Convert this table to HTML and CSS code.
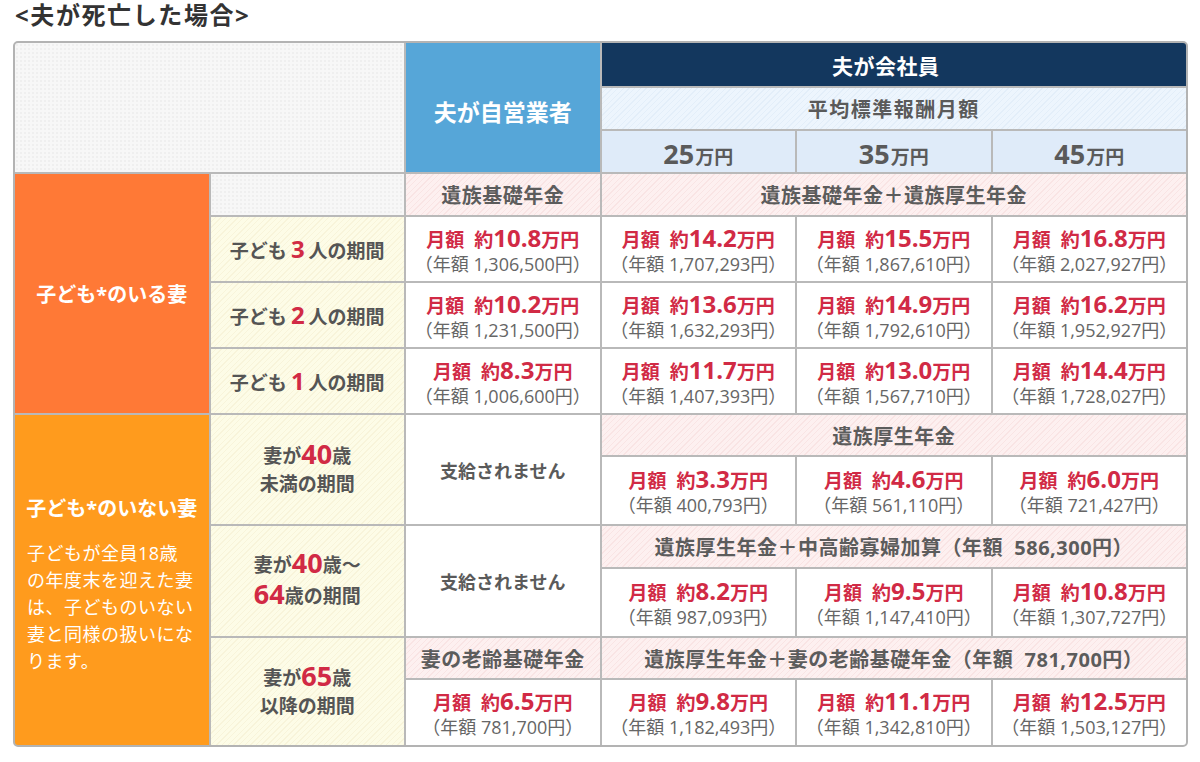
FILE: index.html
```html
<!DOCTYPE html>
<html lang="ja">
<head>
<meta charset="utf-8">
<title>夫が死亡した場合</title>
<link rel="stylesheet" href="styles.css">
</head>
<body>
<h1 class="title">&lt;夫が死亡した場合&gt;</h1>
<div class="wrap">
  <div class="table">
    <div class="cell blank c2 r3"></div>
    <div class="cell self r3">夫が自営業者</div>
    <div class="cell navy c3">夫が会社員</div>
    <div class="cell sub c3">平均標準報酬月額</div>
    <div class="cell amt"><b>25</b>万円</div>
    <div class="cell amt"><b>35</b>万円</div>
    <div class="cell amt"><b>45</b>万円</div>

    <div class="cell ora1 r4">子ども*のいる妻</div>
    <div class="cell blank"></div>
    <div class="cell pink">遺族基礎年金</div>
    <div class="cell pink c3">遺族基礎年金＋遺族厚生年金</div>

    <div class="cell yel">子ども<em>3</em>人の期間</div>
    <div class="cell val"><p class="m">月額<i></i>約<b>10.8</b>万円</p><p class="y">（年額 1,306,500円）</p></div>
    <div class="cell val"><p class="m">月額<i></i>約<b>14.2</b>万円</p><p class="y">（年額 1,707,293円）</p></div>
    <div class="cell val"><p class="m">月額<i></i>約<b>15.5</b>万円</p><p class="y">（年額 1,867,610円）</p></div>
    <div class="cell val"><p class="m">月額<i></i>約<b>16.8</b>万円</p><p class="y">（年額 2,027,927円）</p></div>

    <div class="cell yel">子ども<em>2</em>人の期間</div>
    <div class="cell val"><p class="m">月額<i></i>約<b>10.2</b>万円</p><p class="y">（年額 1,231,500円）</p></div>
    <div class="cell val"><p class="m">月額<i></i>約<b>13.6</b>万円</p><p class="y">（年額 1,632,293円）</p></div>
    <div class="cell val"><p class="m">月額<i></i>約<b>14.9</b>万円</p><p class="y">（年額 1,792,610円）</p></div>
    <div class="cell val"><p class="m">月額<i></i>約<b>16.2</b>万円</p><p class="y">（年額 1,952,927円）</p></div>

    <div class="cell yel">子ども<em>1</em>人の期間</div>
    <div class="cell val"><p class="m">月額<i></i>約<b>8.3</b>万円</p><p class="y">（年額 1,006,600円）</p></div>
    <div class="cell val"><p class="m">月額<i></i>約<b>11.7</b>万円</p><p class="y">（年額 1,407,393円）</p></div>
    <div class="cell val"><p class="m">月額<i></i>約<b>13.0</b>万円</p><p class="y">（年額 1,567,710円）</p></div>
    <div class="cell val"><p class="m">月額<i></i>約<b>14.4</b>万円</p><p class="y">（年額 1,728,027円）</p></div>

    <div class="cell ora2 r6">
      <p class="ora-title">子ども*のいない妻</p>
      <p class="note">子どもが全員18歳<br>の年度末を迎えた妻<br>は、子どものいない<br>妻と同様の扱いにな<br>ります。</p>
    </div>
    <div class="cell yel two r2"><p>妻が<em>40</em>歳</p><p>未満の期間</p></div>
    <div class="cell none r2">支給されません</div>
    <div class="cell pink c3">遺族厚生年金</div>
    <div class="cell val"><p class="m">月額<i></i>約<b>3.3</b>万円</p><p class="y">（年額 400,793円）</p></div>
    <div class="cell val"><p class="m">月額<i></i>約<b>4.6</b>万円</p><p class="y">（年額 561,110円）</p></div>
    <div class="cell val"><p class="m">月額<i></i>約<b>6.0</b>万円</p><p class="y">（年額 721,427円）</p></div>

    <div class="cell yel two wide r2"><p>妻が<em>40</em>歳～</p><p><em>64</em>歳の期間</p></div>
    <div class="cell none r2">支給されません</div>
    <div class="cell pink c3">遺族厚生年金＋中高齢寡婦加算（年額&nbsp;&nbsp;586,300円）</div>
    <div class="cell val"><p class="m">月額<i></i>約<b>8.2</b>万円</p><p class="y">（年額 987,093円）</p></div>
    <div class="cell val"><p class="m">月額<i></i>約<b>9.5</b>万円</p><p class="y">（年額 1,147,410円）</p></div>
    <div class="cell val"><p class="m">月額<i></i>約<b>10.8</b>万円</p><p class="y">（年額 1,307,727円）</p></div>

    <div class="cell yel two r2"><p>妻が<em>65</em>歳</p><p>以降の期間</p></div>
    <div class="cell pink">妻の老齢基礎年金</div>
    <div class="cell pink c3">遺族厚生年金＋妻の老齢基礎年金（年額&nbsp;&nbsp;781,700円）</div>
    <div class="cell val"><p class="m">月額<i></i>約<b>6.5</b>万円</p><p class="y">（年額 781,700円）</p></div>
    <div class="cell val"><p class="m">月額<i></i>約<b>9.8</b>万円</p><p class="y">（年額 1,182,493円）</p></div>
    <div class="cell val"><p class="m">月額<i></i>約<b>11.1</b>万円</p><p class="y">（年額 1,342,810円）</p></div>
    <div class="cell val"><p class="m">月額<i></i>約<b>12.5</b>万円</p><p class="y">（年額 1,503,127円）</p></div>
  </div>
</div>
</body>
</html>
```

FILE: styles.css
```css
* { box-sizing: border-box; }

html, body {
  margin: 0;
  padding: 0;
  background: #ffffff;
}

body {
  font-family: "Open Sans", "Noto Sans CJK JP", sans-serif;
  color: #555555;
  width: 1200px;
  height: 762px;
  overflow: hidden;
}

.title {
  margin: 0;
  padding-left: 15px;
  height: 32px;
  font-size: 24px;
  line-height: 30px;
  font-weight: 700;
  color: #333333;
  letter-spacing: 1.6px;
}

.wrap {
  padding-left: 13px;
  margin-top: 9px;
}

.table {
  width: 1175px;
  display: grid;
  grid-template-columns: repeat(6, 1fr);
  grid-template-rows: 43px 41px 41px 41px 64px 64px 64px 40px 67px 41px 67px 40px 65px;
  gap: 2px;
  background: #b9b9b9;
  border: 2px solid #b3b3b3;
  border-radius: 5px;
  overflow: hidden;
}

.c2 { grid-column: span 2; }
.c3 { grid-column: span 3; }
.r2 { grid-row: span 2; }
.r3 { grid-row: span 3; }
.r4 { grid-row: span 4; }
.r6 { grid-row: span 6; }

.cell {
  display: flex;
  flex-direction: column;
  align-items: center;
  justify-content: center;
  text-align: center;
  background: #ffffff;
  white-space: nowrap;
}

.cell p { margin: 0; }

.blank {
  background-color: #f7f7f7;
  background-image: radial-gradient(#efefef 0.8px, transparent 1px);
  background-size: 4px 4px;
}

.self {
  background: #56a6d8;
  color: #ffffff;
  font-size: 23px;
  font-weight: 700;
  padding-top: 6px;
}

.navy {
  background: #13375e;
  color: #ffffff;
  font-size: 21px;
  font-weight: 700;
  letter-spacing: 0.5px;
  padding-right: 16px;
}

.sub {
  background-color: #ebf4fc;
  background-image: repeating-linear-gradient(135deg, #edf5fd 0 3px, #e3eef9 3px 4px);
  font-size: 20px;
  font-weight: 700;
  letter-spacing: 1.5px;
  color: #5a5a5a;
}

.amt {
  display: block;
  background: #dfebf9;
  font-size: 19px;
  font-weight: 700;
  color: #5a5a5a;
  line-height: 41px;
  padding-top: 2px;
}

.amt b {
  font-size: 27px;
  font-weight: 700;
  margin-right: 1px;
}

.pink {
  background-color: #fdeeee;
  background-image: repeating-linear-gradient(135deg, #fdf0f0 0 3px, #f9e4e4 3px 4px);
  font-size: 20px;
  font-weight: 700;
  letter-spacing: 0.5px;
  color: #5c5c5c;
}

.yel {
  display: block;
  background-color: #fdfbe4;
  background-image: repeating-linear-gradient(135deg, #fdfce7 0 3px, #f8f4da 3px 4px);
  font-size: 19px;
  font-weight: 700;
  color: #555555;
  line-height: 64px;
}

.yel em {
  font-style: normal;
  color: #d12a45;
  font-size: 24px;
  margin: 0 4px;
}

.yel.two {
  display: flex;
  font-size: 19px;
}

.yel.two p {
  line-height: 28px;
  height: 28px;
}

.yel.two.wide p {
  line-height: 31px;
  height: 31px;
}

.yel.two em {
  display: inline-block;
  margin: 0;
  font-size: 27px;
  line-height: 24px;
  vertical-align: -1px;
}

.none {
  font-size: 18px;
  font-weight: 700;
  color: #5a5a5a;
}

.val {
  padding-top: 3px;
}

.m {
  color: #d12a45;
  font-size: 19px;
  font-weight: 700;
  line-height: 24px;
}

.m i {
  display: inline-block;
  width: 10px;
}

.m b {
  font-size: 24px;
  font-weight: 700;
}

.y {
  color: #666666;
  font-size: 18px;
  line-height: 24px;
}

.ora1 {
  background: #ff7936;
  color: #ffffff;
  font-size: 20px;
  font-weight: 700;
}

.ora2 {
  background: #ff9b1d;
  color: #ffffff;
  padding-top: 8px;
}

.ora-title {
  font-size: 20px;
  font-weight: 700;
  line-height: 30px;
}

.note {
  align-self: stretch;
  text-align: left;
  padding-left: 12px;
  margin-top: 16px !important;
  font-size: 18px;
  line-height: 27px;
  letter-spacing: 0.5px;
}
```
